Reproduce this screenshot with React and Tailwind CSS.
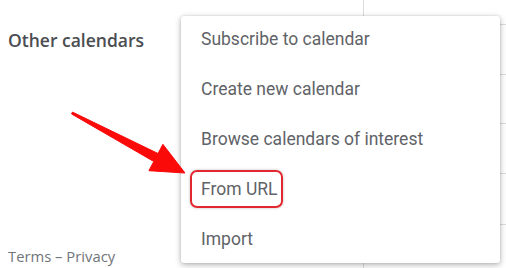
export default function App() {
  const items = [
    "Subscribe to calendar",
    "Create new calendar",
    "Browse calendars of interest",
    "From URL",
    "Import",
  ];
  return (
    <div className="relative w-[506px] h-[268px] overflow-hidden bg-white flex font-['Roboto',sans-serif]">
      <aside className="w-[181px] shrink-0 flex flex-col justify-between pt-[29px] pb-[2px] pl-2 font-['Open_Sans',sans-serif]">
        <div className="text-[17.5px] leading-[22px] font-semibold text-[#4a4d51]">Other calendars</div>
        <div className="text-[14.8px] leading-[20px] text-[#70757a]">Terms – Privacy</div>
      </aside>
      <main className="flex-1 flex">
        <div className="w-[183px] border-r border-[#dadce0]" />
        <div className="flex-1 flex flex-col">
          <div className="h-[25px] border-b border-[#dadce0]" />
          <div className="h-[50px] border-b border-[#dadce0]" />
          <div className="h-[49px] border-b border-[#dadce0]" />
          <div className="h-[50px] border-b border-[#dadce0]" />
          <div className="h-[51px] border-b border-[#dadce0]" />
        </div>
      </main>

      <div className="absolute left-[181px] top-[16px] w-[319px] h-[247px] bg-white rounded-[3px] shadow-[0_2px_6px_rgba(0,0,0,0.28),0_0_3px_rgba(0,0,0,0.12)]">
        {items.map((t, i) => (
          <div key={t} className="relative h-[50px] pb-[4px] pl-5 flex items-center text-[17.5px] text-[#5f6368]">
            {i === 3 && (
              <div className="absolute left-[9px] top-[4px] w-[93px] h-[38px] rounded-[7px] border-2 border-[#e0282e] shadow-[0_0_3px_rgba(0,0,0,0.25)]" />
            )}
            <span className="relative">{t}</span>
          </div>
        ))}
      </div>

      <svg className="absolute left-0 top-0" width="506" height="268" viewBox="0 0 506 268">
        <polygon
          points="72.5,112.1 158,153.5 162.9,144.3 185,173 148.9,170.7 153.8,161.5 71.5,113.9"
          fill="#fb0a0a"
          stroke="#fb0a0a"
          strokeWidth="1"
          strokeLinejoin="round"
        />
      </svg>
    </div>
  );
}
